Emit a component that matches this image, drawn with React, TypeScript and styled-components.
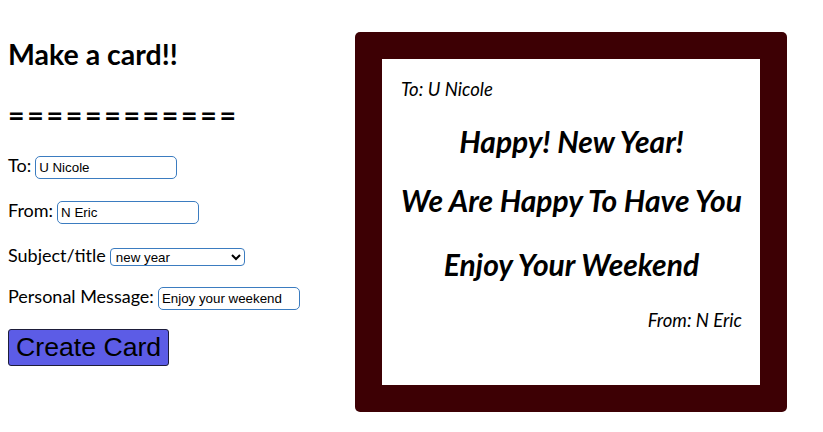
import React, { useState } from "react";
import styled, { createGlobalStyle } from "styled-components";

const GlobalStyle = createGlobalStyle`
  body {
    margin: 8px;
    font-family: "Lato", "Open Sans", sans-serif;
    font-size: 18px;
    color: #000;
    background: #fff;
  }
`;

const Page = styled.div`
  display: flex;
  align-items: flex-start;
`;

const FormColumn = styled.form`
  display: flex;
  flex-direction: column;
  width: 347px;
  flex-shrink: 0;
`;

const Heading = styled.h2<{ $top: number; $spacing?: number }>`
  margin: ${(p) => p.$top}px 0 0;
  font-size: 28.5px;
  line-height: 36px;
  font-weight: 700;
  letter-spacing: ${(p) => p.$spacing ?? 0}px;
`;

const Row = styled.div<{ $top: number }>`
  display: flex;
  align-items: baseline;
  gap: 4px;
  margin-top: ${(p) => p.$top}px;
  line-height: 24px;
`;

const TextInput = styled.input`
  width: 142px;
  height: 23px;
  box-sizing: border-box;
  border: 1px solid #3b7cc0;
  border-radius: 5px;
  padding: 1px 3px;
  font-family: Arial, "Liberation Sans", sans-serif;
  font-size: 13.33px;
  color: #000;
`;

const Select = styled.select`
  width: 135px;
  height: 18px;
  box-sizing: border-box;
  border: 1px solid #3b7cc0;
  border-radius: 4px;
  padding: 0 0 0 1px;
  font-family: Arial, "Liberation Sans", sans-serif;
  font-size: 13.33px;
  color: #000;
  background: #fff;
`;

const CreateButton = styled.button`
  align-self: flex-start;
  margin-top: 19px;
  height: 37px;
  padding: 0 7px;
  background: #5c5ce6;
  color: #000;
  border: 1px solid #1d1d3a;
  border-radius: 3px;
  font-family: Arial, "Liberation Sans", sans-serif;
  font-size: 26.67px;
  line-height: 1;
  cursor: pointer;
`;

const CardFrame = styled.div`
  margin-top: 24px;
  width: 432px;
  height: 380px;
  box-sizing: border-box;
  padding: 27px;
  background: #3d0004;
  border-radius: 5px;
`;

const CardFace = styled.div`
  height: 100%;
  box-sizing: border-box;
  background: #fff;
  padding: 16px 18px 0 19px;
  display: flex;
  flex-direction: column;
`;

const CardLine = styled.p<{ $align: "left" | "right"; $top?: number }>`
  margin: ${(p) => p.$top ?? 0}px 0 0;
  font-style: italic;
  font-size: 18.5px;
  line-height: 28px;
  text-align: ${(p) => p.$align};
`;

const CardHeading = styled.h2<{ $top: number }>`
  margin: ${(p) => p.$top}px 0 0;
  font-style: italic;
  font-weight: 700;
  font-size: 30px;
  line-height: 40px;
  text-align: center;
  white-space: nowrap;
`;

const subjects: Record<string, string> = {
  "new year": "Happy! New Year!",
  birthday: "Happy Birthday!",
  welcome: "Welcome!",
};

export default function App() {
  const [to, setTo] = useState("U Nicole");
  const [from, setFrom] = useState("N Eric");
  const [subject, setSubject] = useState("new year");
  const [message, setMessage] = useState("Enjoy your weekend");

  const titleCase = (s: string) =>
    s.replace(/\b\w/g, (c) => c.toUpperCase());

  return (
    <>
      <GlobalStyle />
      <Page>
        <FormColumn onSubmit={(e) => e.preventDefault()}>
          <Heading $top={28}>Make a card!!</Heading>
          <Heading $top={25} $spacing={2.7}>============</Heading>
          <Row $top={20}>
            To: <TextInput value={to} onChange={(e) => setTo(e.target.value)} />
          </Row>
          <Row $top={19}>
            From: <TextInput value={from} onChange={(e) => setFrom(e.target.value)} />
          </Row>
          <Row $top={19}>
            Subject/title
            <Select value={subject} onChange={(e) => setSubject(e.target.value)}>
              <option value="new year">new year</option>
              <option value="birthday">birthday</option>
              <option value="welcome">welcome</option>
            </Select>
          </Row>
          <Row $top={17}>
            Personal Message:
            <TextInput value={message} onChange={(e) => setMessage(e.target.value)} />
          </Row>
          <CreateButton type="submit">Create Card</CreateButton>
        </FormColumn>

        <CardFrame>
          <CardFace>
            <CardLine $align="left">To: {to}</CardLine>
            <CardHeading $top={18}>{subjects[subject]}</CardHeading>
            <CardHeading $top={19}>We Are Happy To Have You</CardHeading>
            <CardHeading $top={24}>{titleCase(message)}</CardHeading>
            <CardLine $align="right" $top={22}>
              From: {from}
            </CardLine>
          </CardFace>
        </CardFrame>
      </Page>
    </>
  );
}
